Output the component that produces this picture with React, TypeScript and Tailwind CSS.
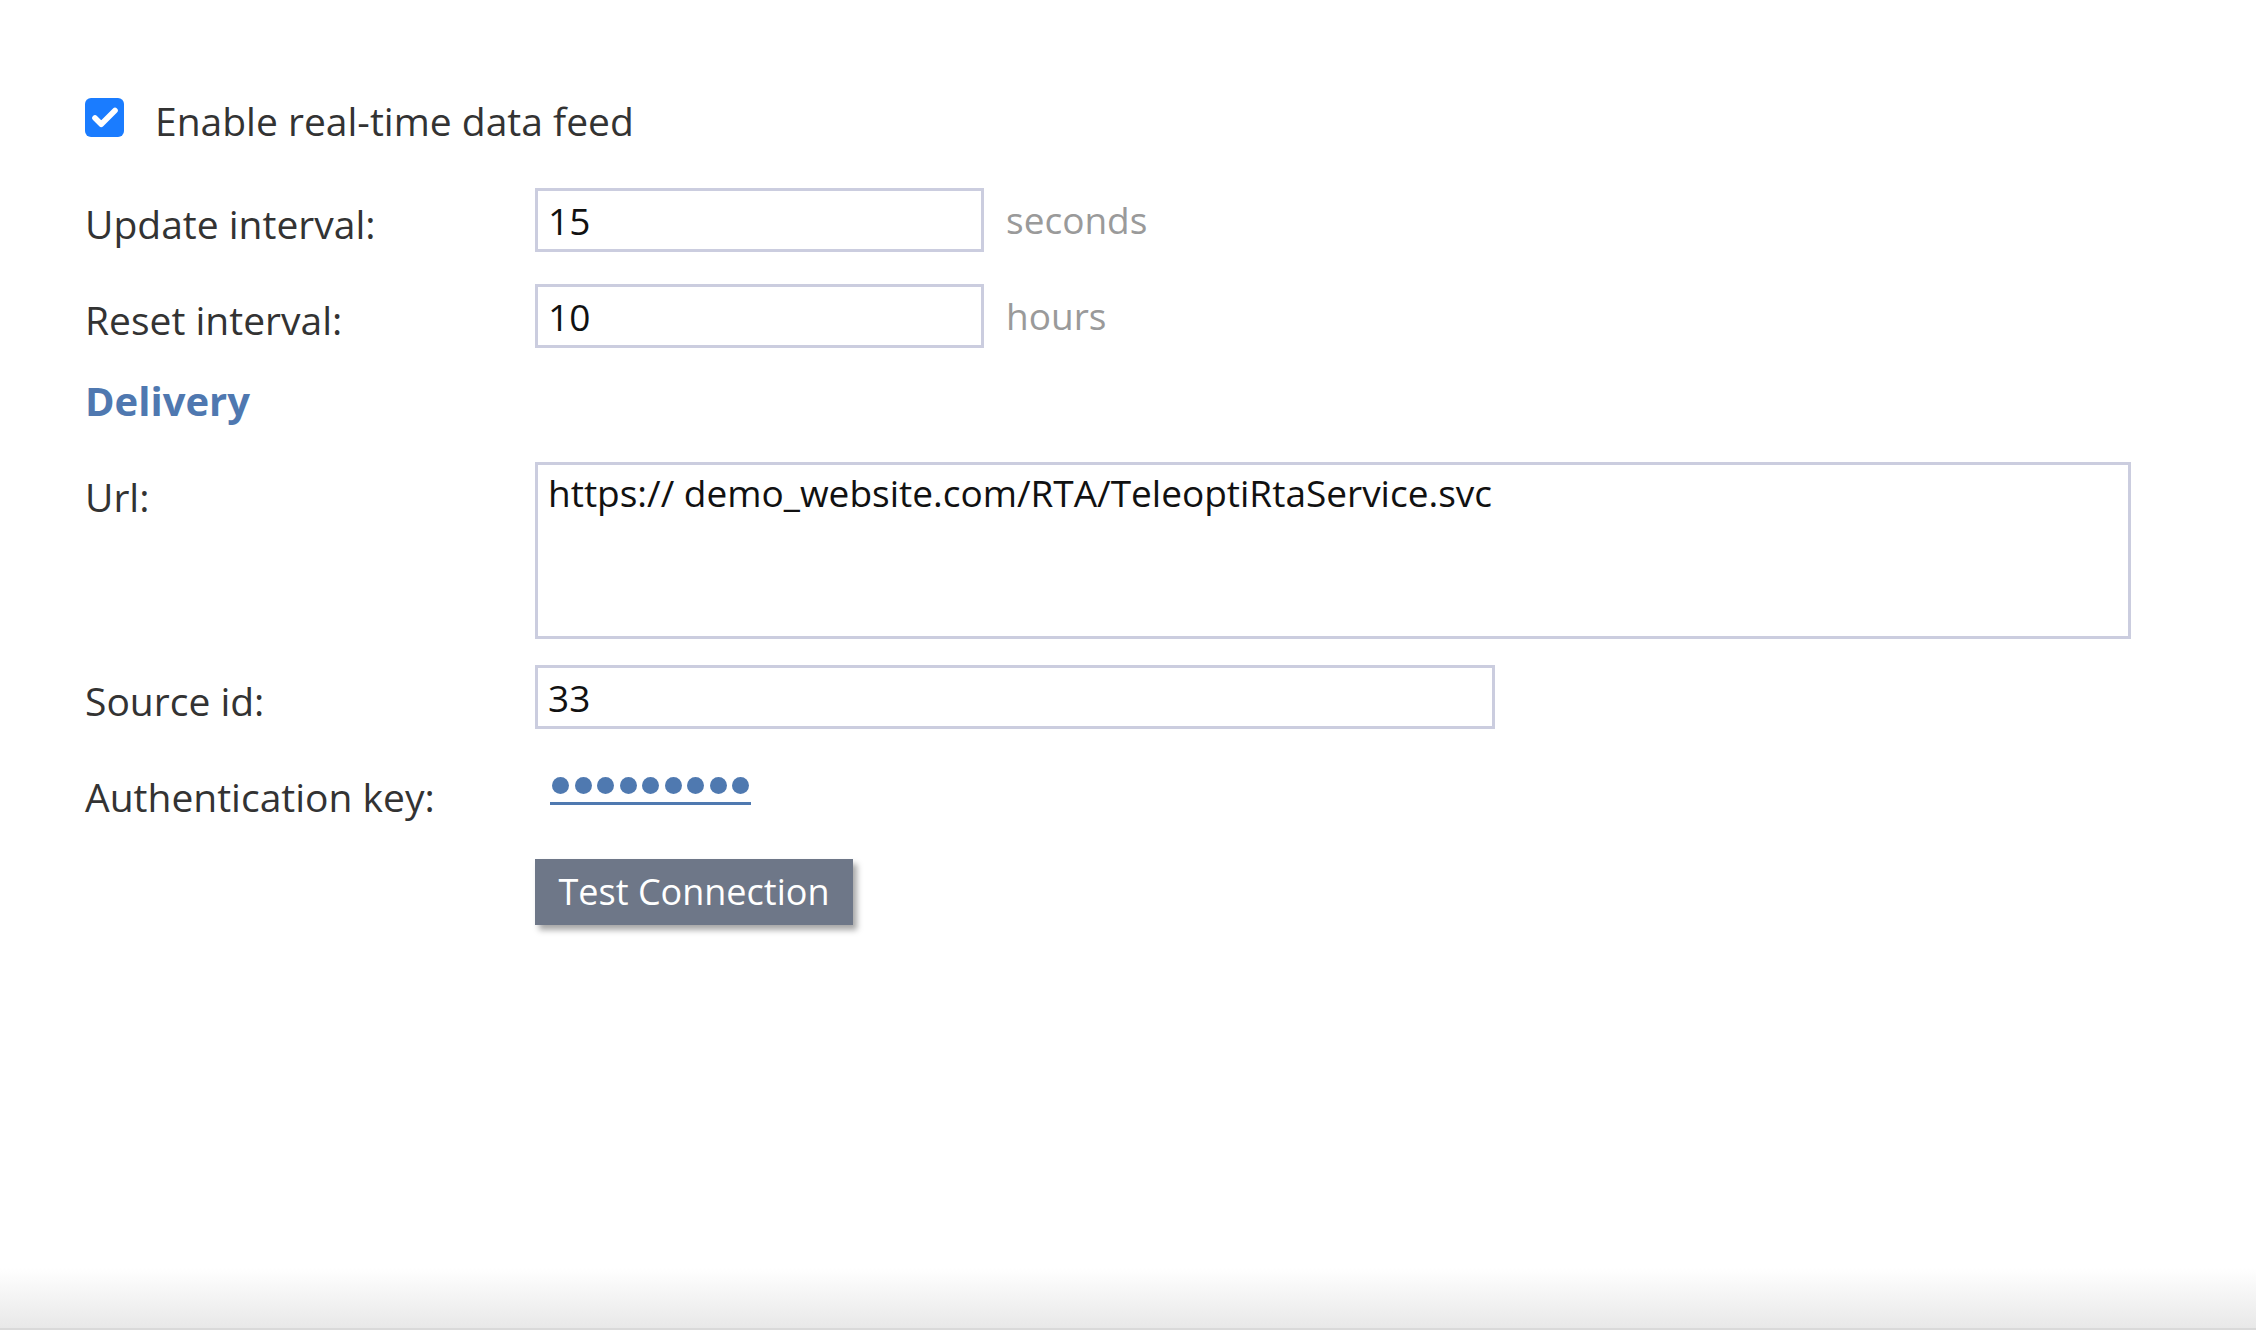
import { Check } from 'lucide-react';

const labelClass = 'w-[450px] shrink-0 text-[39px] text-[#333333]';
const inputClass =
  'h-[64px] border-[3px] border-[#cbcddf] bg-white px-[10px] text-[37px] text-[#111111] outline-none';

function Field({
  label,
  children,
  className = '',
  labelShift = 'translate-y-[4px]',
}: {
  label: string;
  children: React.ReactNode;
  className?: string;
  labelShift?: string;
}) {
  return (
    <div className={`flex items-center ${className}`}>
      <div className={`${labelClass} ${labelShift}`}>{label}</div>
      {children}
    </div>
  );
}

export default function App() {
  return (
    <div className="flex min-h-screen flex-col bg-white font-['Open_Sans',sans-serif]">
      <div className="flex-1 pl-[85px] pt-[98px]">
        <label className="flex h-[39px] items-center gap-[31px]">
          <span className="flex h-[39px] w-[39px] items-center justify-center rounded-[6px] bg-[#1a7cff]">
            <Check size={30} strokeWidth={4.5} className="text-white" />
          </span>
          <span className="translate-y-[4px] text-[39px] text-[#333333]">Enable real-time data feed</span>
        </label>

        <Field label="Update interval:" className="mt-[51px]">
          <input className={`${inputClass} w-[449px]`} defaultValue="15" />
          <span className="ml-[22px] text-[37px] text-[#9a9a9a]">seconds</span>
        </Field>

        <Field label="Reset interval:" className="mt-[32px]">
          <input className={`${inputClass} w-[449px]`} defaultValue="10" />
          <span className="ml-[22px] text-[37px] text-[#9a9a9a]">hours</span>
        </Field>

        <h2 className="mt-[28px] flex h-[50px] items-center text-[40px] font-bold text-[#4f78b0]">Delivery</h2>

        <div className="mt-[36px] flex items-start">
          <div className={`${labelClass} pt-[6px]`}>Url:</div>
          <textarea
            className="h-[177px] w-[1596px] resize-none border-[3px] border-[#cbcddf] bg-white px-[10px] py-[2px] text-[37px] leading-[1.4] text-[#111111] outline-none"
            defaultValue="https:// demo_website.com/RTA/TeleoptiRtaService.svc"
          />
        </div>

        <Field label="Source id:" className="mt-[26px]">
          <input className={`${inputClass} w-[960px]`} defaultValue="33" />
        </Field>

        <Field label="Authentication key:" className="mt-[40px] h-[56px]" labelShift="">
          <a href="#" className="ml-[15px] flex -translate-y-[6px] flex-col gap-[8px]" aria-label="Change authentication key">
            <span className="flex gap-[5.5px] px-[2px]">
              {Array.from({ length: 9 }).map((_, i) => (
                <span key={i} className="h-[17px] w-[17px] rounded-full bg-[#4f79b0]" />
              ))}
            </span>
            <span className="h-[3px] w-full bg-[#4f79b0]" />
          </a>
        </Field>

        <div className="mt-[34px] pl-[450px]">
          <button className="h-[66px] w-[318px] bg-[#6e7788] text-[36px] text-white shadow-[4px_5px_6px_rgba(0,0,0,0.35)]">
            Test Connection
          </button>
        </div>
      </div>
      <div className="h-[62px] border-b-[2px] border-[#d9d9d9] bg-gradient-to-b from-white to-[#e8e8e8]" />
    </div>
  );
}
